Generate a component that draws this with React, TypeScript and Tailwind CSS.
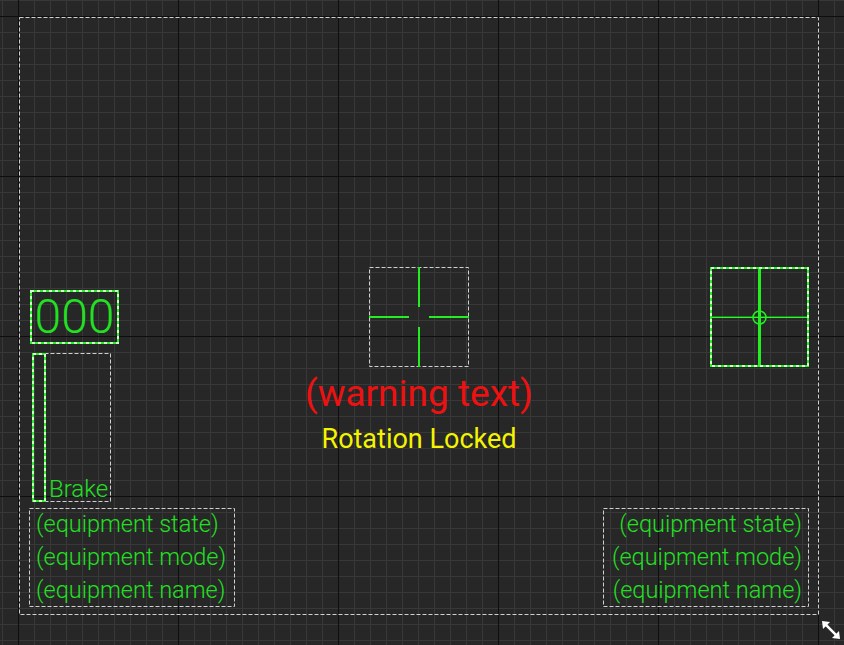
import React from "react";

const LINE = "#22ee22";
const DASH = "#d0d0d0";

function Frame({ w, h, green = false }: { w: number; h: number; green?: boolean }) {
  if (green) {
    return (
      <svg className="absolute left-0 top-0 pointer-events-none" width={w} height={h}>
        <rect x={1} y={1} width={w - 2} height={h - 2} fill="none" stroke="#2af02a" strokeWidth={2} />
        <rect
          x={1}
          y={1}
          width={w - 2}
          height={h - 2}
          fill="none"
          stroke="#e8ffe0"
          strokeWidth={2}
          strokeDasharray="3 3"
          opacity={0.85}
        />
      </svg>
    );
  }
  return (
    <svg className="absolute left-0 top-0 pointer-events-none" width={w} height={h}>
      <rect
        x={0.5}
        y={0.5}
        width={w - 1}
        height={h - 1}
        fill="none"
        stroke={DASH}
        strokeWidth={1}
        strokeDasharray="4 2"
      />
    </svg>
  );
}

function Grid() {
  return (
    <svg className="absolute left-0 top-0" width={844} height={645}>
      <defs>
        <pattern id="minor" width="16" height="16" patternUnits="userSpaceOnUse" x="2" y="0">
          <path d="M0 0.5H16M0.5 0V16" stroke="#383838" strokeWidth="1" fill="none" />
        </pattern>
        <pattern id="major" width="160" height="160" patternUnits="userSpaceOnUse" x="18" y="16">
          <path d="M0 0.5H160M0.5 0V160" stroke="#0e0e0e" strokeWidth="1" fill="none" />
        </pattern>
      </defs>
      <rect width="844" height="645" fill="#272727" />
      <rect width="844" height="645" fill="url(#minor)" />
      <rect width="844" height="645" fill="url(#major)" />
    </svg>
  );
}

function InfoBox({ align }: { align: "left" | "right" }) {
  return (
    <div
      className={
        "relative w-[206px] h-[99px] flex flex-col text-[23.5px] leading-[33px] font-light text-[#22e022] " +
        (align === "left" ? "items-start pl-[7px]" : "items-end pr-[7px]")
      }
    >
      <Frame w={206} h={99} />
      <span className="whitespace-nowrap">(equipment state)</span>
      <span className="whitespace-nowrap">(equipment mode)</span>
      <span className="whitespace-nowrap">(equipment name)</span>
    </div>
  );
}

export default function App() {
  return (
    <div
      className="relative w-[844px] h-[645px] overflow-hidden"
      style={{ fontFamily: "Roboto, 'Liberation Sans', sans-serif" }}
    >
      <Grid />

      {/* main canvas frame */}
      <div className="absolute left-[19px] top-[17px] w-[800px] h-[598px]">
        <Frame w={800} h={598} />
      </div>

      {/* 000 display */}
      <div className="absolute left-[30px] top-[290px] w-[89px] h-[54px] flex items-center justify-center">
        <Frame w={89} h={54} green />
        <span className="text-[48px] leading-[48px] font-light text-[#22e022]">000</span>
      </div>

      {/* Brake gauge */}
      <div className="absolute left-[32px] top-[353px] w-[79px] h-[149px] flex items-end">
        <Frame w={79} h={149} />
        <div className="relative w-[14px] h-[149px] shrink-0">
          <Frame w={14} h={149} green />
        </div>
        <span className="ml-[3px] text-[24px] leading-[26px] font-light text-[#22e022] whitespace-nowrap">
          Brake
        </span>
      </div>

      {/* left info */}
      <div className="absolute left-[29px] top-[508px]">
        <InfoBox align="left" />
      </div>

      {/* right info */}
      <div className="absolute left-[603px] top-[508px]">
        <InfoBox align="right" />
      </div>

      {/* center crosshair with texts */}
      <div className="absolute left-[369px] top-[267px] w-[100px] flex flex-col items-center">
        <div className="relative w-[100px] h-[100px] shrink-0">
          <Frame w={100} h={100} />
          <svg className="absolute left-0 top-0" width={100} height={100}>
            <path d="M0 50H40M60 50H100M50 0V40M50 60V100" stroke={LINE} strokeWidth={2} fill="none" />
          </svg>
        </div>
        <div className="mt-[7px] text-[37px] leading-[40px] text-[#ee1111] whitespace-nowrap">(warning text)</div>
        <div className="mt-[9px] text-[27px] leading-[32px] text-[#f4f400] whitespace-nowrap">Rotation Locked</div>
      </div>

      {/* right crosshair */}
      <div className="absolute left-[710px] top-[267px] w-[99px] h-[100px]">
        <Frame w={99} h={100} green />
        <svg className="absolute left-0 top-0" width={99} height={100}>
          <rect x={2} y={49.6} width={95} height={1.4} fill="#22ff22" />
          <rect x={48} y={2} width={3} height={96} fill={LINE} />
          <circle cx={49.5} cy={50.5} r={6.5} stroke={LINE} strokeWidth={1.5} fill="none" />
        </svg>
      </div>

      {/* resize handle */}
      <svg className="absolute left-[820px] top-[619px]" width={22} height={22} viewBox="0 0 22 22">
        <path d="M5 5L17 17" stroke="#ffffff" strokeWidth={2.5} strokeLinecap="square" />
        <path d="M2 2L10 3L3 10Z" fill="#ffffff" />
        <path d="M20 20L12 19L19 12Z" fill="#ffffff" />
      </svg>
    </div>
  );
}
